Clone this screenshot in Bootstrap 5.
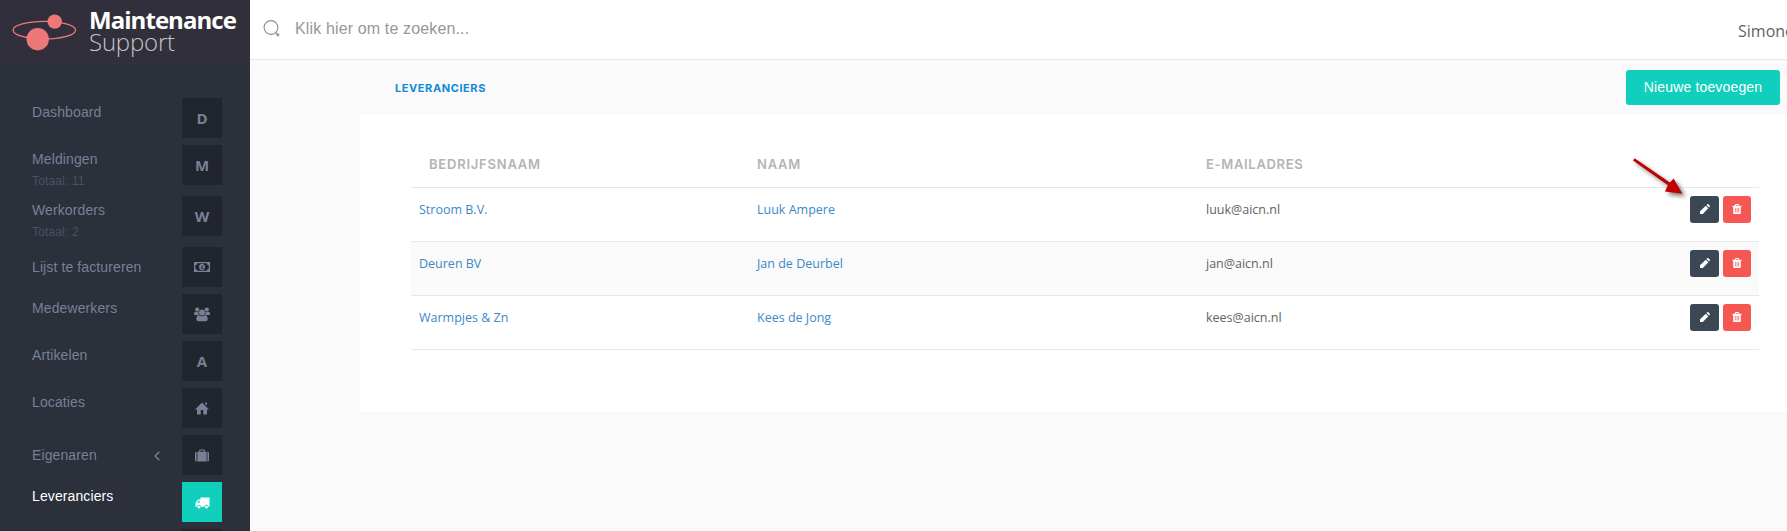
<!DOCTYPE html>
<html lang="nl">
<head>
<meta charset="utf-8">
<title>Leveranciers</title>
<link href="https://cdn.jsdelivr.net/npm/bootstrap@5.3.0/dist/css/bootstrap.min.css" rel="stylesheet">
<style>
body{font-family:"Open Sans","Noto Sans",sans-serif;font-size:13px;color:#626262;background:#fafafa;height:531px;overflow:hidden}
.side{width:250px;height:531px;background:#2b303b;overflow:hidden}
.brand-bar{height:65px;background:#312f3b}
.brand-bar svg{width:66px;height:40px;margin:13px 0 0 11px}
.brand-name{margin:9px 0 0 12px;font-size:24px;line-height:22px;color:#fff;white-space:nowrap}
.brand-name b{font-weight:700;letter-spacing:-.95px}
.brand-name span{font-weight:300;color:#c4c4c8;letter-spacing:-.2px}
.menu{padding:33px 28px 0 32px;font-family:"Liberation Sans",sans-serif;font-size:14px}
.menu li{height:47px;color:#788195}
.menu li.tall{height:51px}
.menu a{color:inherit;text-decoration:none;line-height:16px;padding-top:6px;letter-spacing:.11px}
.menu .low a{padding-top:12px}
.menu small{display:block;font-size:12px;line-height:14px;color:#4b5162;margin-top:7px;letter-spacing:.15px}
.menu .on{color:#fff}
.tile{width:40px;height:40px;margin-right:-1px;background:#21252d;color:#788195;font:bold 15px/40px "Open Sans",sans-serif}
.menu li .tile{margin-right:0}
.on .tile{background:#10cfbd;color:#fff}
.on .tile svg{margin-top:2px}
.chev{margin:16px 22px 0 auto}
.top{height:60px;background:#fff;border-bottom:1px solid #e8e8e9}
.lens{margin:-3px 0 0 13px}
.find{font:16px/20px "Liberation Sans",sans-serif;color:#979797;margin-left:15px;margin-top:-2px;letter-spacing:.14px}
.who{font-size:16px;margin-right:-9px;margin-top:3px;width:58px;white-space:nowrap}
.head-row{height:55px;padding:0 7px 0 145px}
.crumb{font:700 11px/16px Inter,sans-serif;color:#0f8ad8;letter-spacing:.58px;margin-top:20px}
.btn-add{background:#10cfbd;color:#fff;font:14px/20px "Liberation Sans",sans-serif;height:35px;width:154px;border-radius:3px;padding:0 0 1px;letter-spacing:.15px;margin-top:10px}
.panel{margin-left:110px;height:297px;background:#fff;padding:25px 28px 0 51px}
.sup{table-layout:fixed;margin:0;color:#626262;--bs-table-color:#626262;--bs-table-bg:transparent}
.sup th{height:47px;padding:1px 8px 0;vertical-align:middle;font:600 13px/18px Inter,sans-serif;color:#b4b4b4;border-color:#e8e8e9;letter-spacing:.78px}
.sup th:first-child{padding-left:18px}
.sup th:nth-child(3){letter-spacing:.68px}
.sup td{height:54px;padding:12px 8px 0;line-height:20px;border-color:#e8e8e9;font-size:12.5px}
.sup td a{color:#3d88c7;text-decoration:none}
.sup tr.alt td{background:#fafafa}
.sup td.acts{padding-top:8px}
.act{height:27px;width:29px;padding:0;border-radius:3px;color:#fff}
.act.pen{background:#3b4752}
.act.bin{background:#f55753;width:28px}
.c-company{width:338px}
.c-name{width:449px}
.c-mail{width:330px}
.pointer{position:absolute;left:1626px;top:150px;pointer-events:none}
.pointer path{filter:drop-shadow(3px 3px 2px rgba(0,0,0,.5))}
</style>
</head>
<body>
<svg class="d-none">
  <symbol id="i-pen" viewBox="0 0 10 10"><path fill="#fff" d="M0 10V7.200L5.800 1.700l2.500 2.500L2.800 10zM6.500 1 7.200.3c.4-.3.8-.3 1.200 0l1.300 1.300c.3.4.3.8 0 1.200L9 3.500z"/></symbol>
  <symbol id="i-bin" viewBox="0 0 10 10"><path fill="#fff" fill-rule="evenodd" d="M.3 1.700h2.500L3.400.1h3.200l.6 1.600h2.500v1H8.800V9c0 .6-.3 1-.8 1H2c-.5 0-.8-.4-.8-1V2.700H.3zM4 1l-.3.700h2.600L6 1zM2.900 3.900v4.600h.7V3.900zm1.800 0v4.600h.7V3.900zm1.700 0v4.600h.7V3.900z"/></symbol>
</svg>
<div class="d-flex">
<aside class="side flex-shrink-0">
  <div class="brand-bar d-flex align-items-start">
    <svg viewBox="11 13 66 40" class="flex-shrink-0"><ellipse cx="44.3" cy="30.2" rx="31.2" ry="8.8" fill="none" stroke="#ee7778" stroke-width="1.3"/><circle cx="54.7" cy="21.6" r="7.2" fill="#ee7778"/><circle cx="37.7" cy="39.2" r="11.2" fill="#ee7778"/></svg>
    <div class="brand-name d-flex flex-column"><b>Maintenance</b><span>Support</span></div>
  </div>
  <ul class="menu list-unstyled m-0">
    <li class="d-flex justify-content-between"><a href="#">Dashboard</a><span class="tile text-center">D</span></li>
    <li class="d-flex justify-content-between tall"><a href="#">Meldingen<small>Totaal: 11</small></a><span class="tile text-center">M</span></li>
    <li class="d-flex justify-content-between tall"><a href="#">Werkorders<small>Totaal: 2</small></a><span class="tile text-center">W</span></li>
    <li class="d-flex justify-content-between low"><a href="#">Lijst te factureren</a><span class="tile d-flex align-items-center justify-content-center"><svg width="16" height="12" viewBox="0 0 16 12"><path fill="currentColor" fill-rule="evenodd" d="M0 1h16v10H0zM3.200 2.200A2.200 2.200 0 0 1 1.200 4.200v3.600a2.200 2.200 0 0 1 2 2h9.600a2.200 2.200 0 0 1 2-2V4.200a2.200 2.200 0 0 1-2-2z"/><path fill="currentColor" fill-rule="evenodd" d="M8 2.700c1.900 0 2.900 1.500 2.900 3.300S9.900 9.300 8 9.300 5.100 7.800 5.100 6 6.100 2.700 8 2.700zM7 4.800h.6v2.400H7V8h2.200v-.8h-.6V4.200h-.7z"/></svg></span></li>
    <li class="d-flex justify-content-between"><a href="#">Medewerkers</a><span class="tile d-flex align-items-center justify-content-center"><svg width="16" height="15" viewBox="0 0 16 15" fill="currentColor"><circle cx="3.200" cy="2.600" r="2.100"/><circle cx="12.800" cy="2.600" r="2.100"/><path d="M0 7.500C0 5.500.6 4.500 1.600 4.700c1 .6 2 .6 3 .1A4 4 0 0 0 5 8H1.500C.6 8 0 8 0 7.500zM16 7.500c0-2-.6-3-1.600-2.800-1 .6-2 .6-3 .1A4 4 0 0 1 11 8h3.500c.9 0 1.500 0 1.500-.5z"/><circle cx="8" cy="5.500" r="3"/><path d="M4.500 8c1.800 1.500 5.200 1.500 7 0 1.500.3 2.200 2 2.200 4.200 0 1.300-.8 2-2 2H4.300c-1.200 0-2-.7-2-2 0-2.200.7-3.900 2.200-4.200z"/></svg></span></li>
    <li class="d-flex justify-content-between"><a href="#">Artikelen</a><span class="tile text-center">A</span></li>
    <li class="d-flex justify-content-between"><a href="#">Locaties</a><span class="tile d-flex align-items-center justify-content-center"><svg width="14" height="13" viewBox="0 0 14 13" fill="currentColor"><path d="M7 .5 14 7.500h-2V12.500H8.300V8H5.700v4.500H2v-5H0zM10 .5h2v3l-2-2z"/></svg></span></li>
    <li class="d-flex justify-content-between low"><a href="#">Eigenaren</a><svg class="chev" width="6" height="10" viewBox="0 0 6 10"><path d="M5.300.8 1.200 5l4.100 4.200" fill="none" stroke="currentColor" stroke-width="1.300"/></svg><span class="tile d-flex align-items-center justify-content-center"><svg width="14" height="13" viewBox="0 0 14 13" fill="currentColor"><path d="M0 4.500C0 3.300.6 2.700 1.600 2.700v9.800C.6 12.500 0 11.900 0 10.900zM14 4.500c0-1.200-.6-1.800-1.600-1.800v9.800c1 0 1.600-.6 1.600-1.600zM2.400 2.700h1.800V1.200C4.200.7 4.600.4 5 .4h4c.4 0 .8.3.8.8v1.500h1.800v9.800H2.400zM5.200 1.400v1.300h3.600V1.400z" fill-rule="evenodd"/></svg></span></li>
    <li class="d-flex justify-content-between on"><a href="#">Leveranciers</a><span class="tile d-flex align-items-center justify-content-center"><svg width="15" height="12" viewBox="0 0 15 12" fill="currentColor"><path fill-rule="evenodd" d="M5.500.5h9v9.200h-1a2 2 0 0 0-4 0H6a2 2 0 0 0-4 0H.5V5.800L3 2.600h2.500zM2 5.800h2.700V3.700H3.500z"/><circle cx="4" cy="10" r="1.500"/><circle cx="11.500" cy="10" r="1.500"/></svg></span></li>
    <li class="d-flex justify-content-end"><span class="tile"></span></li>
  </ul>
</aside>
<main class="flex-grow-1">
  <header class="top d-flex align-items-center">
    <svg class="lens" width="17" height="17" viewBox="0 0 17 17" fill="none" stroke="#8b8b8b"><circle cx="8" cy="7.500" r="6.900" stroke-width="1.100"/><path d="m12.500 12.300 2 2" stroke-width="1.200"/><path d="M14.900 13.300v3.200M13.300 14.900h3.200" stroke-width="1.300"/></svg>
    <span class="find">Klik hier om te zoeken...</span>
    <span class="who ms-auto">Simone</span>
  </header>
  <div class="head-row d-flex justify-content-between align-items-start">
    <span class="crumb">LEVERANCIERS</span>
    <button class="btn btn-add border-0">Nieuwe toevoegen</button>
  </div>
  <section class="panel">
    <table class="table sup">
      <colgroup><col class="c-company"><col class="c-name"><col class="c-mail"><col></colgroup>
      <thead><tr><th>BEDRIJFSNAAM</th><th>NAAM</th><th>E-MAILADRES</th><th></th></tr></thead>
      <tbody>
        <tr><td><a href="#">Stroom B.V.</a></td><td><a href="#">Luuk Ampere</a></td><td>luuk@aicn.nl</td><td class="acts"><div class="d-flex justify-content-end gap-1"><button class="btn act pen border-0 d-flex align-items-center justify-content-center"><svg width="10" height="10"><use href="#i-pen"/></svg></button><button class="btn act bin border-0 d-flex align-items-center justify-content-center"><svg width="10" height="10"><use href="#i-bin"/></svg></button></div></td></tr>
        <tr class="alt"><td><a href="#">Deuren BV</a></td><td><a href="#">Jan de Deurbel</a></td><td>jan@aicn.nl</td><td class="acts"><div class="d-flex justify-content-end gap-1"><button class="btn act pen border-0 d-flex align-items-center justify-content-center"><svg width="10" height="10"><use href="#i-pen"/></svg></button><button class="btn act bin border-0 d-flex align-items-center justify-content-center"><svg width="10" height="10"><use href="#i-bin"/></svg></button></div></td></tr>
        <tr><td><a href="#">Warmpjes &amp; Zn</a></td><td><a href="#">Kees de Jong</a></td><td>kees@aicn.nl</td><td class="acts"><div class="d-flex justify-content-end gap-1"><button class="btn act pen border-0 d-flex align-items-center justify-content-center"><svg width="10" height="10"><use href="#i-pen"/></svg></button><button class="btn act bin border-0 d-flex align-items-center justify-content-center"><svg width="10" height="10"><use href="#i-bin"/></svg></button></div></td></tr>
      </tbody>
    </table>
  </section>
</main>
</div>
<svg class="pointer" width="70" height="56" viewBox="1626 150 70 56"><path d="m1633 160.500 1.600-2.300 35.200 24.300 3.900-4 8.700 15.300-17.500-2.200 3-6.400z" fill="#c00000"/></svg>
<script src="https://cdn.jsdelivr.net/npm/bootstrap@5.3.0/dist/js/bootstrap.bundle.min.js"></script>
</body>
</html>
